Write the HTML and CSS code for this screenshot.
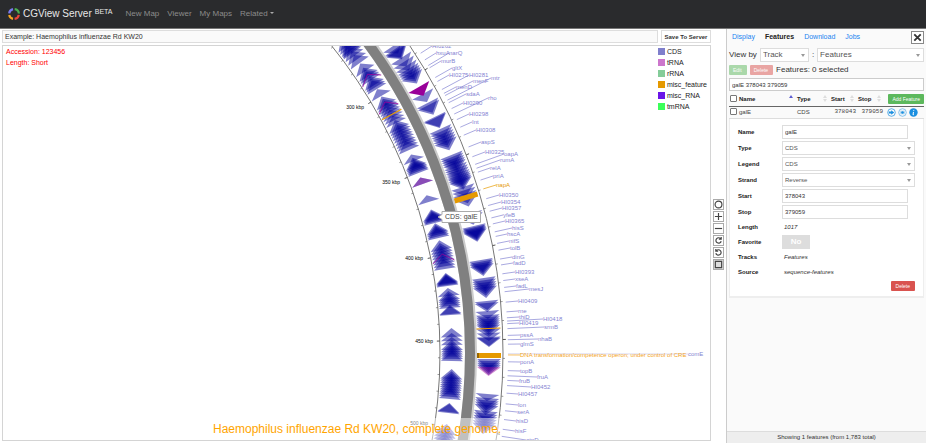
FILE: index.html
```html
<!DOCTYPE html>
<html lang="en">
<head>
<meta charset="utf-8">
<title>CGView Server</title>
<link rel="stylesheet" href="styles.css">
</head>
<body>
<header class="topbar">
  <a class="brand" href="#">
    <svg class="logo" viewBox="0 0 14 14" fill="none" stroke-width="2.2" aria-hidden="true">
      <path stroke="#7a7af0" d="M2.2 6.4A4.9 4.9 0 0 1 6 2.1"/>
      <path stroke="#4caf50" d="M7.7 2.1A4.9 4.9 0 0 1 11.9 6.5"/>
      <path stroke="#e8453c" d="M11.8 7.9A4.9 4.9 0 0 1 7.6 11.9"/>
      <path stroke="#f5a623" d="M6 11.8A4.9 4.9 0 0 1 2.2 8"/>
    </svg>
    <span>CGView Server</span><span class="beta">BETA</span>
  </a>
  <nav class="nav">
    <a href="#">New Map</a><a href="#">Viewer</a><a href="#">My Maps</a><a href="#" class="drop">Related</a>
  </nav>
</header>
<main class="main">
  <section class="viewer">
    <div class="titlebar">
      <input class="map-name" type="text" aria-label="Map name" value="Example: Haemophilus influenzae Rd KW20">
      <button class="save" type="button">Save To Server</button>
    </div>
    <div class="map">
      <svg id="map" class="map-svg" viewBox="3 46 707 394" preserveAspectRatio="xMidYMin slice" role="img" aria-label="Genome map"></svg>
      <div class="map-info"><p>Accession: 123456</p><p>Length: Short</p></div>
      <ul class="legend">
        <li><i class="cds"></i>CDS</li>
        <li><i class="trna"></i>tRNA</li>
        <li><i class="rrna"></i>rRNA</li>
        <li><i class="misc-feature"></i>misc_feature</li>
        <li><i class="misc-rna"></i>misc_RNA</li>
        <li><i class="tmrna"></i>tmRNA</li>
      </ul>
    </div>
  </section>
  <div class="tools">
    <button type="button" aria-label="Reset"><svg viewBox="0 0 10 10"><circle cx="5" cy="5" r="3.8"/></svg></button>
    <button type="button" aria-label="Zoom in"><svg viewBox="0 0 10 10"><path d="M5 1v8M1 5h8"/></svg></button>
    <button type="button" aria-label="Zoom out"><svg viewBox="0 0 10 10"><path d="M1 5h8"/></svg></button>
    <button type="button" aria-label="Move clockwise"><svg viewBox="0 0 10 10"><path d="M7.4 3A3 3 0 1 0 8 5.8M8 1v2.6H5.4"/></svg></button>
    <button type="button" aria-label="Move counter-clockwise"><svg viewBox="0 0 10 10"><path d="M2.6 3A3 3 0 1 1 2 5.8M2 1v2.6h2.6"/></svg></button>
    <button type="button" class="on" aria-label="Toggle format"><svg viewBox="0 0 10 10"><path d="M1.5 1.5h7v7h-7z"/></svg></button>
  </div>
  <aside class="side">
    <div class="tabs">
      <a href="#">Display</a><a href="#" class="active">Features</a><a href="#">Download</a><a href="#">Jobs</a>
      <button class="close" type="button" aria-label="Close"><svg viewBox="0 0 12 12"><path d="M2.500 2.500l7 7M9.500 2.500l-7 7"/></svg></button>
    </div>
    <div class="side-body">
      <div class="viewby">
        <label for="by">View by</label>
        <span class="sel by"><select id="by"><option>Track</option></select></span>
        <span class="colon">:</span>
        <span class="sel what"><select aria-label="Track name"><option>Features</option></select></span>
      </div>
      <div class="actions">
        <button class="btn green dim" type="button">Edit</button>
        <button class="btn red dim" type="button">Delete</button>
        <span>Features: 0 selected</span>
      </div>
      <input class="search" type="text" aria-label="Search" value="galE 378043 379059">
      <table class="features">
        <thead>
          <tr>
            <th class="c-name"><input type="checkbox" aria-label="Select all">Name<svg class="sort up" viewBox="0 0 5 9"><path d="M0 4L2.500 0 5 4z"/></svg></th>
            <th class="c-type">Type<svg class="sort" viewBox="0 0 5 9"><path d="M0 4L2.500 0 5 4zM0 5l2.500 4L5 5z"/></svg></th>
            <th class="c-num">Start<svg class="sort" viewBox="0 0 5 9"><path d="M0 4L2.500 0 5 4zM0 5l2.500 4L5 5z"/></svg></th>
            <th class="c-num">Stop<svg class="sort" viewBox="0 0 5 9"><path d="M0 4L2.500 0 5 4zM0 5l2.500 4L5 5z"/></svg></th>
            <th class="c-act"><button class="btn green add" type="button">Add Feature</button></th>
          </tr>
        </thead>
        <tbody>
          <tr>
            <td><input type="checkbox" aria-label="Select galE">galE</td>
            <td>CDS</td>
            <td class="num">378043</td>
            <td class="num">379059</td>
            <td>
              <div class="icons">
                <button type="button" aria-label="Go to"><svg viewBox="0 0 9 9"><circle cx="4.5" cy="4.5" r="3.8"/><path class="solid" d="M1.8 3.6h2.4V2.2l3 2.3-3 2.3V5.4H1.8z"/></svg></button>
                <button type="button" aria-label="Center"><svg viewBox="0 0 9 9"><circle cx="4.5" cy="4.5" r="3.8" opacity=".7"/><path d="M2 3.2h5M2 4.5h5M2 5.8h5" opacity=".5"/><circle class="solid" cx="4.5" cy="4.5" r="1.3"/></svg></button>
                <button type="button" aria-label="Info"><svg viewBox="0 0 9 9"><circle class="solid" cx="4.5" cy="4.5" r="4.2"/><path class="info" d="M4.9 1.9l-.2.9M4.5 3.9L4 6.7h.8"/></svg></button>
              </div>
            </td>
          </tr>
        </tbody>
      </table>
      <form class="card">
        <div class="field"><label for="f-name">Name</label><input id="f-name" type="text" value="galE"></div>
        <div class="field"><label for="f-type">Type</label><span class="sel"><select id="f-type"><option>CDS</option></select></span></div>
        <div class="field"><label for="f-legend">Legend</label><span class="sel"><select id="f-legend"><option>CDS</option></select></span></div>
        <div class="field"><label for="f-strand">Strand</label><span class="sel"><select id="f-strand"><option>Reverse</option></select></span></div>
        <div class="field"><label for="f-start">Start</label><input id="f-start" type="text" value="378043"></div>
        <div class="field"><label for="f-stop">Stop</label><input id="f-stop" type="text" value="379059"></div>
        <div class="field plain"><b>Length</b><em>1017</em></div>
        <div class="field plain"><label for="f-fav">Favorite</label><button id="f-fav" class="fav" type="button">No</button></div>
        <div class="field plain"><b>Tracks</b><em>Features</em></div>
        <div class="field plain"><b>Source</b><em>sequence-features</em></div>
        <div class="card-foot"><button class="btn red" type="button">Delete</button></div>
      </form>
    </div>
    <footer class="status">Showing 1 features (from 1,783 total)</footer>
  </aside>
</main>
<script src="map.js"></script>
</body>
</html>
```
FILE: styles.css
```css
* { box-sizing: border-box; }
body {
  margin: 0;
  height: 100vh;
  display: flex;
  flex-direction: column;
  overflow: hidden;
  background: #fff;
  color: #333;
  font: 6px/8px "Liberation Sans", Arial, sans-serif;
}
button, input, select { font: inherit; color: inherit; margin: 0; }
button { padding: 0; }
a { text-decoration: none; color: inherit; }

.topbar {
  flex: none;
  height: 29px;
  display: flex;
  align-items: center;
  padding: 0 7px;
  background: #2a2b2d;
  border-bottom: 1px solid #777;
}
.brand { display: flex; align-items: center; color: #e8e8e8; font-size: 10px; line-height: 14px; }
.logo { width: 14px; height: 14px; margin-right: 2px; }
.beta { font-size: 7px; line-height: 8px; margin: 0 0 5px 3px; }
.nav { display: flex; gap: 8px; margin-left: 13px; color: #8c8c8c; font-size: 8px; line-height: 10px; }
.drop::after {
  content: "";
  display: inline-block;
  margin-left: 2px;
  vertical-align: 2px;
  border: 2px solid transparent;
  border-top-color: #aaa;
  border-bottom: 0;
}

.main { flex: 1; min-height: 0; display: grid; grid-template-columns: minmax(0, 1fr) 15px 200px; }
.viewer { display: flex; flex-direction: column; gap: 2px; padding: 1px 0 2px 2px; min-height: 0; }
.titlebar { display: flex; gap: 3px; height: 13px; }
.map-name { flex: 1; min-width: 0; border: 1px solid #ddd; background: #fafafa; padding: 0 2px; font-size: 7px; }
.save { width: 50px; border: 1px solid #ddd; background: #fff; font-weight: bold; }
.map { flex: 1; min-height: 0; position: relative; border: 1px solid #d4d4d4; overflow: hidden; }
.map-svg { display: block; width: 100%; height: 100%; }
.map-info { position: absolute; left: 3px; top: 0; color: #f00; font-size: 7px; line-height: 11px; }
.map-info p { margin: 0; }
.legend {
  position: absolute;
  top: 0;
  right: 3px;
  margin: 0;
  padding: 0;
  list-style: none;
  font-size: 7px;
  line-height: 11px;
  color: #222;
}
.legend li { display: flex; align-items: center; gap: 2px; }
.legend i { width: 7px; height: 7px; }
.cds { background: #7f7fcc; }
.trna { background: #cc76cc; }
.rrna { background: #84cc99; }
.misc-feature { background: #e59900; }
.misc-rna { background: #6a14e8; }
.tmrna { background: #3bff59; }

.tools { display: flex; flex-direction: column; justify-content: center; align-items: center; gap: 1px; padding-bottom: 3px; }
.tools button { width: 11px; height: 11px; border: 1px solid #aaa; background: #fff; display: flex; }
.tools svg { width: 9px; height: 9px; fill: none; stroke: #444; stroke-width: 1.3; }
.tools .on { background: #ddd; }

.side { display: flex; flex-direction: column; min-height: 0; border-left: 1px solid #ccc; background: #fafafa; }
.tabs { display: flex; align-items: center; gap: 10px; height: 15px; padding: 0 2px 0 5px; font-size: 7px; color: #1b83f0; }
.tabs .active { color: #222; font-weight: bold; }
.close { margin: 1px 0 0 auto; width: 13px; height: 13px; border: 1px solid #888; background: #fff; display: flex; }
.close svg { width: 11px; height: 11px; stroke: #333; stroke-width: 2; }
.side-body { flex: 1; padding: 4px 2px 0; }
.viewby { display: flex; align-items: center; font-size: 8px; line-height: 10px; height: 14px; }
.sel { position: relative; display: block; }
.sel::after {
  content: "";
  position: absolute;
  right: 4px;
  top: 50%;
  margin-top: -1px;
  border: 2px solid transparent;
  border-top: 3px solid #999;
  border-bottom: 0;
  pointer-events: none;
}
.sel select {
  display: block;
  width: 100%;
  height: 14px;
  appearance: none;
  border: 1px solid #ddd;
  border-radius: 0;
  background: #fff;
  color: #555;
  padding: 0 2px;
}
.by { width: 49px; margin-left: 3px; }
.colon { margin: 0 3px; }
.what { flex: 1; }
.actions { display: flex; align-items: center; gap: 3px; height: 16px; font-size: 8px; line-height: 10px; }
.btn { height: 10px; border: 0; border-radius: 1px; padding: 0 4px; color: #fff; font-size: 5px; line-height: 10px; }
.green { background: #5cb85c; }
.red { background: #d9534f; }
.dim { opacity: .5; }
.actions .btn { padding: 0 5px 0 4px; }
.search { display: block; width: 100%; height: 13px; border: 1px solid #ccc; background: #fff; padding: 0 2px; }

.features { width: 100%; border-collapse: collapse; table-layout: fixed; margin-top: 1px; }
.features th, .features td { padding: 0; text-align: left; vertical-align: middle; white-space: nowrap; }
.features th { height: 14px; border-bottom: 1px solid #666; color: #222; }
.features td { height: 12px; border-bottom: 1px solid #ddd; color: #444; }
.features input { appearance: none; width: 7px; height: 7px; margin: 0 2px 0 1px; border: 1px solid #777; border-radius: 1px; background: #fff; vertical-align: -1px; }
.c-name { width: 68px; }
.c-type { width: 34px; }
.c-num { width: 27px; }
.sort { float: right; width: 4px; height: 7px; margin-right: 4px; fill: #ddd; }
.sort.up { fill: #5a5ad0; }
.features .c-act { text-align: right; }
.features .add { padding: 0 4px; font-weight: normal; }
.features .num { font-family: "Liberation Mono", monospace; text-align: right; padding-right: 2px; }
.icons { display: flex; justify-content: flex-end; gap: 2px; padding-right: 6px; }
.icons button { border: 0; background: none; width: 9px; height: 9px; }
.icons svg { display: block; width: 9px; height: 9px; fill: none; stroke: #1b8fe0; stroke-width: .7; }
.icons .solid { fill: #1b8fe0; stroke: none; }
.icons .info { stroke: #fff; stroke-width: 1; }

.card { padding: 5px 8px 5px; background: #fff; border: 1px solid #eee; border-top: 0; border-bottom: 2px solid #eee; }
.field { display: grid; grid-template-columns: 44px 1fr; align-items: center; height: 16px; }
.field label, .field b { font-weight: bold; color: #222; }
.field input { width: 126px; height: 14px; border: 1px solid #ddd; background: #fff; padding: 0 2px; }
.field em { padding-left: 2px; }
.plain { height: 15px; }
.fav { justify-self: start; width: 28px; height: 14px; border: 0; background: #ddd; color: #fff; font-size: 8px; font-weight: bold; }
.card-foot { display: flex; justify-content: flex-end; padding-top: 1px; }
.card-foot .btn { padding: 0 5px; }
.status { flex: none; height: 12px; line-height: 11px; border-top: 1px solid #ddd; background: #eee; text-align: center; }
```
FILE: map.js
```js
const svg = document.getElementById('map');
const CX = -50, CY = 353;
const INNER = [491, 513], OUTER = [527, 551];
const CDS = '#000099', GENE = '#8484d2', ORANGE = '#e59900', MAGENTA = '#990099';

function add(tag, attrs, text) {
  const el = document.createElementNS('http://www.w3.org/2000/svg', tag);
  for (const k in attrs) el.setAttribute(k, attrs[k]);
  if (text) el.textContent = text;
  svg.appendChild(el);
  return el;
}
const at = (r, a) => [CX + r * Math.cos(a), CY + r * Math.sin(a)];
const pts = list => list.map(p => p.map(v => v.toFixed(1)).join(',')).join(' ');
const angle = (track, y) => Math.asin((y - CY) / ((track[0] + track[1]) / 2));

// Arrow whose base sits at height y; len is the arrow length along the arc.
function arrow(track, y, len, fill = CDS, opacity = 0.5) {
  const mid = (track[0] + track[1]) / 2;
  const a = angle(track, y);
  const tip = a + (track === INNER ? -len : len) / mid;
  add('polygon', { points: pts([at(track[0], a), at(track[1], a), at(mid, tip)]), fill, opacity });
}
function cluster(track, from, to, n, len = 10) {
  const count = n > 4 ? Math.ceil(n * 0.75) : n;
  for (let i = 0; i < count; i++) arrow(track, count > 1 ? from + (to - from) * i / (count - 1) : from, len);
}
function bar(track, y1, y2, fill) {
  const a = angle(track, y1), b = angle(track, y2);
  add('polygon', { points: pts([at(track[0], a), at(track[1], a), at(track[1], b), at(track[0], b)]), fill });
}

// Backbone and rulers
add('circle', { cx: CX, cy: CY, r: 521, fill: 'none', stroke: '#ccc', 'stroke-width': 12 });
add('circle', { cx: CX, cy: CY, r: 520, fill: 'none', stroke: '#808080', 'stroke-width': 10 });
for (const r of [490, 553]) add('circle', { cx: CX, cy: CY, r, fill: 'none', stroke: '#777', 'stroke-width': 1 });
const deg = Math.PI / 180;
for (let i = -20; i <= 6; i++) {
  const a = (-1.4 + i * 1.96) * deg;
  const major = i % 5 === 0;
  for (const [r, dir] of [[490, -1], [553, 1]]) {
    const p = at(r, a), q = at(r + dir * (major ? 3 : 2), a);
    add('line', { x1: p[0], y1: p[1], x2: q[0], y2: q[1], stroke: '#555', 'stroke-width': major ? 1 : 0.6 });
  }
}

[[46, 53, 4], [52, 63, 5], [71, 71, 1, 9], [76, 80, 3], [85, 89, 3], [96, 96, 1, 8], [105, 112, 4],
 [114, 123, 5, 8], [129, 139, 6], [142, 150, 5], [161, 161, 1, 7], [167, 173, 6], [202, 202, 1, 7],
 [219, 223, 5], [233, 238, 4], [250, 269, 10], [283, 286, 4], [296, 296, 1, 8], [300, 308, 6, 9],
 [314, 315, 2, 9], [337, 337, 1, 9], [341, 341, 1, 8], [345, 345, 1, 8], [350, 361, 8],
 [379, 399, 13], [412, 413, 2, 9], [434, 450, 8]].forEach(c => cluster(INNER, ...c));
[[46, 46, 1, 9], [49, 51, 3], [58, 58, 1], [62, 62, 1], [66, 66, 1], [69, 75, 5], [94, 94, 1, 9],
 [103, 105, 2, 11], [117, 118, 2, 11], [129, 141, 7], [155, 163, 6], [166, 173, 4], [175, 180, 4],
 [187, 197, 5], [213, 215, 2], [226, 231, 6, 11], [260, 265, 5, 11], [278, 287, 6, 11], [301, 303, 2, 9],
 [311, 311, 1, 8], [315, 325, 8], [329, 329, 1, 8], [333, 333, 1, 8], [337, 338, 2, 9],
 [359, 365, 5], [394, 394, 1, 7], [398, 405, 5], [411, 424, 7]].forEach(c => cluster(OUTER, ...c));
arrow(OUTER, 87, 10, MAGENTA, 1);
arrow(OUTER, 367, 9, MAGENTA, 0.45);
arrow(INNER, 184, 7, CDS, 0.5);
arrow(INNER, 184, 7, MAGENTA, 0.4);
for (const y of [81, 109, 262]) {
  const a = angle(INNER, y);
  add('polyline', { points: pts([at(491, a), at(502, a - 8 / 502), at(513, a)]), fill: 'none', stroke: MAGENTA, 'stroke-width': 0.8 });
}
bar(INNER, 114, 115, ORANGE);
bar(OUTER, 195, 200, ORANGE);
bar(OUTER, 328, 329, ORANGE);
bar(OUTER, 353, 358, ORANGE);
add('rect', { x: 477, y: 353, width: 2, height: 5, fill: '#996600' });

// Gene labels: each leader runs along the radius through its label.
[['HI0262', 432, 46], ['hxuA', 436, 53], ['narQ', 449, 53], ['murB', 441, 61], ['gltX', 452, 68],
 ['HI0275', 449, 75], ['HI0281', 469, 75], ['menF', 473, 81], ['mtr', 491, 78], ['menD', 456, 87],
 ['sdaA', 466, 94], ['HI0290', 463, 103], ['rho', 488, 98], ['HI0298', 469, 114], ['Int', 472, 122],
 ['HI0308', 476, 130], ['aspS', 481, 142], ['HI0325', 485, 152], ['oapA', 504, 154], ['rumA', 500, 160],
 ['relA', 490, 168], ['priA', 493, 176], ['napA', 496, 185, ORANGE], ['HI0350', 499, 195],
 ['HI0354', 501, 202], ['HI0357', 502, 208], ['yfeB', 503, 215], ['HI0365', 505, 221], ['hisS', 512, 228],
 ['hscA', 507, 234], ['nifS', 509, 241], ['tolB', 510, 248], ['dinG', 512, 257], ['fadD', 513, 263],
 ['HI0393', 515, 272], ['xseA', 515, 279], ['fadL', 516, 286], ['mesJ', 529, 289], ['HI0409', 518, 301],
 ['rne', 518, 311], ['thiD', 519, 317], ['HI0418', 543, 319], ['HI0419', 519, 323], ['srmB', 544, 327],
 ['pssA', 520, 335], ['nhaB', 538, 339], ['glmS', 520, 344], ['comE', 688, 354],
 ['DNA transformation/competence operon; under control of CRE', 520, 355, '#f5a623'],
 ['ponA', 520, 362], ['topB', 520, 371], ['fruA', 537, 377], ['fruB', 519, 381], ['HI0452', 531, 387],
 ['HI0457', 518, 394], ['lon', 518, 405], ['serA', 517, 412], ['hisD', 516, 421], ['hisF', 515, 431],
 ['atpD', 526, 440]].forEach(([name, x, y, fill = GENE]) => {
  const s = at(558, Math.atan2(y - CY, x - CX));
  const long = x - s[0] > 100;
  add('line', { x1: s[0], y1: s[1], x2: x, y2: y, stroke: fill, 'stroke-width': long ? 0.3 : 0.7 });
  add('text', { x, y: y + 2, fill, 'font-size': 6 }, name);
});
[['300 kbp', 364, 107], ['350 kbp', 400, 182], ['400 kbp', 423, 258], ['450 kbp', 433, 341], ['500 kbp', 428, 423]]
  .forEach(([t, x, y]) => add('text', { x, y: y + 2, 'text-anchor': 'end', 'font-size': 5, fill: '#000' }, t));

// Caption over a translucent backing
add('rect', { x: 211, y: 418, width: 290, height: 23, fill: '#fff', opacity: 0.5 });
add('text', { x: 213, y: 433, 'font-size': 12, fill: '#ffa500' }, 'Haemophilus influenzae Rd KW20, complete genome.');

// Tooltip
add('path', { d: 'M442 211.500H480.500V222.500H442V219.500L438 217L442 214.500Z', fill: '#fff', stroke: '#aaa', 'stroke-width': 1 });
add('text', { x: 445, y: 219, 'font-size': 7, fill: '#444' }, 'CDS: galE');
```
